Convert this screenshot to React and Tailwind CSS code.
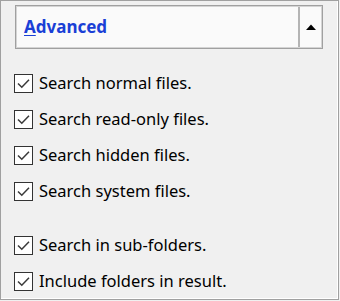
import React from "react";

function Check({ label }) {
  return (
    <div className="flex h-[36px] items-center">
      <div className="ml-[13px] flex h-[19px] w-[19px] items-center justify-center border-[1.5px] border-[#333333] bg-white">
        <svg width="15" height="15" viewBox="0 0 15 15">
          <path d="M2 7.5 L5.8 11.3 L13 3.8" fill="none" stroke="#3a3a3a" strokeWidth="1.5" />
        </svg>
      </div>
      <span className="ml-[6px] text-[16.5px] leading-none text-black" style={{ fontFamily: '"Noto Sans", "Open Sans", sans-serif' }}>
        {label}
      </span>
    </div>
  );
}

export default function App() {
  return (
    <div className="h-[301px] w-[340px] bg-[#f0f0f0]">
      <div className="flex h-[300px] w-[339px] flex-col border border-[#a0a0a0] shadow-[inset_-1px_-1px_0_#ffffff]">
        <div className="ml-[14px] mt-[4px] flex h-[44px] w-[308px] border border-[#a0a0a0] bg-[#fafafa] shadow-[inset_0_0_0_1px_#d4d4d4]">
          <div className="flex flex-1 items-center pl-[8px] pb-[1px]">
            <span className="text-[17px] font-bold text-[#1a3fd6]" style={{ fontFamily: '"Noto Sans", "Open Sans", sans-serif' }}>
              <span className="underline underline-offset-2">A</span>dvanced
            </span>
          </div>
          <div className="my-[1px] w-[2px] bg-[#b4b4b4]" />
          <div className="flex w-[22px] items-center justify-center">
            <svg width="10" height="6" viewBox="0 0 10 6">
              <path d="M0 6 L5 0.5 L10 6 Z" fill="#000" />
            </svg>
          </div>
        </div>
        <div className="mt-[16px] flex flex-col">
          <Check label="Search normal files." />
          <Check label="Search read-only files." />
          <Check label="Search hidden files." />
          <Check label="Search system files." />
        </div>
        <div className="mt-[18px] flex flex-col">
          <Check label="Search in sub-folders." />
          <Check label="Include folders in result." />
        </div>
      </div>
    </div>
  );
}
